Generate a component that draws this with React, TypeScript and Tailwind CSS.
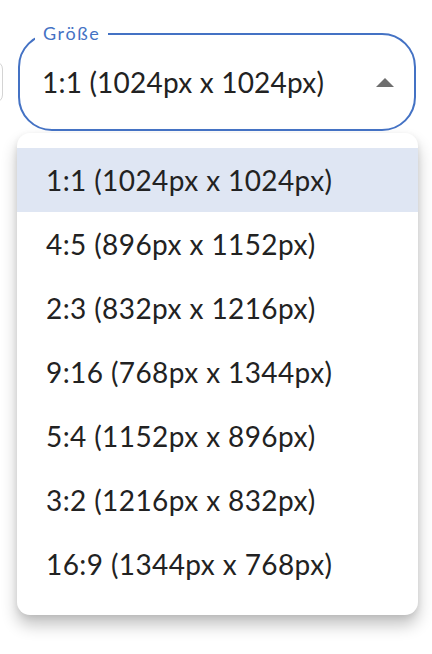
import { useState } from "react"

const sizes = [
  "1:1 (1024px x 1024px)",
  "4:5 (896px x 1152px)",
  "2:3 (832px x 1216px)",
  "9:16 (768px x 1344px)",
  "5:4 (1152px x 896px)",
  "3:2 (1216px x 832px)",
  "16:9 (1344px x 768px)",
]

export default function App() {
  const [selected, setSelected] = useState(sizes[0])

  return (
    <div className="relative h-[654px] w-[432px] overflow-hidden bg-white font-['Lato',sans-serif] text-[#222]">
      {/* neighbouring field, mostly off-screen */}
      <div className="absolute left-[-40px] top-[61px] h-[42px] w-[43px] rounded-lg border border-[#d4d4d4]" />

      <div className="pl-[18px] pt-[33px]">
        <div className="relative flex h-[98px] w-[398px] items-center rounded-[34px] border-2 border-[#4472c4] pl-[22px] pr-[22px]">
          <span className="absolute left-[15px] top-[-12px] bg-white px-[8px] text-[18px] leading-[20px] tracking-[1.6px] text-[#4472c4]">
            Größe
          </span>
          <span className="flex-1 text-[28px] tracking-[0.2px]">{selected}</span>
          <svg width="18" height="9" viewBox="0 0 18 9" className="mr-[-2px]">
            <path d="M9 0 L18 9 L0 9 Z" fill="#6e6e6e" />
          </svg>
        </div>
      </div>

      <div className="ml-[17px] mt-[2px] w-[401px] rounded-[13px] bg-white pb-[19px] pt-[15px] shadow-[0_10px_16px_rgba(0,0,0,0.24),0_2px_6px_rgba(0,0,0,0.08)]">
        {sizes.map((s) => (
          <div
            key={s}
            onClick={() => setSelected(s)}
            className={`flex h-[64px] items-center pl-[29px] text-[28px] tracking-[0.4px] ${s === selected ? "bg-[#dfe6f3]" : ""}`}
          >
            {s}
          </div>
        ))}
      </div>
    </div>
  )
}
